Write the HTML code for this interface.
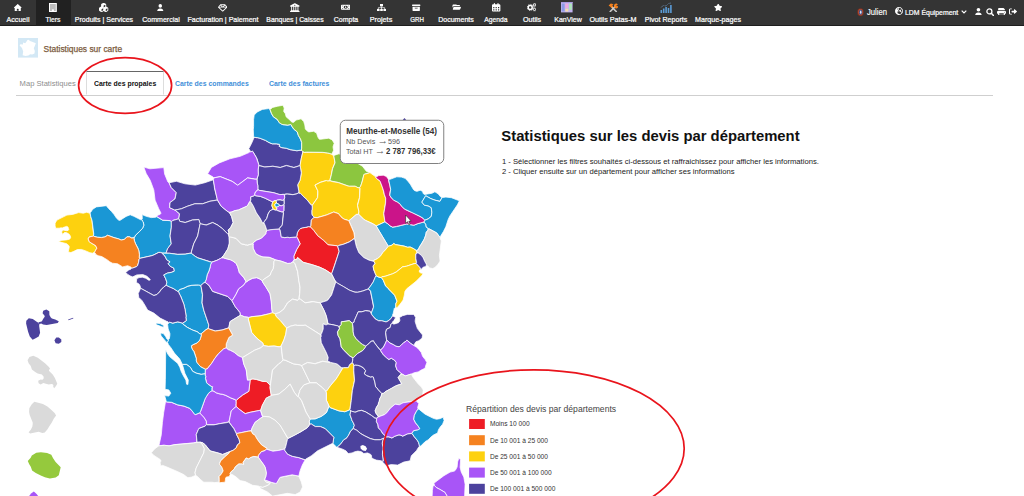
<!DOCTYPE html>
<html lang="fr"><head><meta charset="utf-8"><title>Statistiques sur carte</title>
<style>
html,body{margin:0;padding:0;background:#fff;}
body{width:1024px;height:496px;overflow:hidden;position:relative;font-family:"Liberation Sans",sans-serif;color:#222;}
.abs{position:absolute;white-space:nowrap;}
.ic{position:absolute;display:block;}
#nav{position:absolute;left:0;top:0;width:1024px;height:25.8px;background:#343434;border-bottom:0.4px solid #1e1e1e;box-sizing:border-box}
#nav .sel{position:absolute;left:35.6px;top:0;width:35.3px;height:25.8px;background:#212121;}
.nl{position:absolute;top:15.3px;font-size:7.7px;font-weight:normal;-webkit-text-stroke:0.22px #fff;color:#fff;white-space:nowrap;transform:translateX(-50%);line-height:10px;}
#map{position:absolute;left:0;top:0;}
#map polygon{stroke:#fff;stroke-width:0.75;stroke-linejoin:round;}
</style></head><body>

<div id="nav"><div class="sel"></div>
<svg class="ic" style="left:14.00px;top:3.85px;width:7.50px;height:7.50px" viewBox="0 0 512 512" preserveAspectRatio="none"><path fill="#fff" d="M277.8 8.6c-12.3-11.4-31.3-11.4-43.5 0l-224 208c-9.6 9-12.8 22.9-8 35.1S18.8 272 32 272h16v176c0 35.3 28.7 64 64 64h288c35.3 0 64-28.7 64-64V272h16c13.2 0 25-8.1 29.8-20.3s1.6-26.2-8-35.1zM240 320h32c26.5 0 48 21.5 48 48v96H192v-96c0-26.5 21.5-48 48-48"/></svg>
<div class="nl" style="left:17.75px;transform:translateX(-50%) scaleX(0.928)">Accueil</div>
<div class="nl" style="left:53.25px;transform:translateX(-50%) scaleX(0.892)">Tiers</div>
<svg class="ic" style="left:99.45px;top:2.95px;width:9.30px;height:9.30px" viewBox="0 0 512 512" preserveAspectRatio="none"><path fill="#fff" d="M284-1.3c-17.3-10-38.7-10-56 0l-84.2 48.6c-17.3 10-28 28.5-28 48.5v101.9l-88.3 51c-17.3 10-28 28.5-28 48.5v97.3c0 20 10.7 38.5 28 48.5l84.3 48.6c17.3 10 38.7 10 56 0l88.3-51 88.3 51c17.3 10 38.7 10 56 0l84.1-48.6c17.3-10 28-28.5 28-48.5v-97.3c0-20-10.7-38.5-28-48.5l-88.3-51V95.8c0-20-10.7-38.5-28-48.5zm-52 293.9v106.5l-88.3 51c-1.2.7-2.6 1.1-4 1.1V345.9zm231.4.6c.7 1.2 1.1 2.6 1.1 4v97.3c0 2.9-1.5 5.5-4 6.9L376.2 450c-1.2.7-2.6 1.1-4 1.1V345.8zM348.3 95.8v101.9L256 251V144.5l91.2-52.6c.7 1.2 1.1 2.6 1.1 4z"/></svg>
<div class="nl" style="left:104.1px;transform:translateX(-50%) scaleX(0.911)">Produits | Services</div>
<svg class="ic" style="left:157.22px;top:3.85px;width:6.56px;height:7.50px" viewBox="0 0 448 512" preserveAspectRatio="none"><path fill="#fff" d="M224 248a120 120 0 1 0 0-240 120 120 0 1 0 0 240m-29.7 56C95.8 304 16 383.8 16 482.3c0 16.4 13.3 29.7 29.7 29.7h356.6c16.4 0 29.7-13.3 29.7-29.7 0-98.5-79.8-178.3-178.3-178.3z"/></svg>
<div class="nl" style="left:160.5px;transform:translateX(-50%) scaleX(0.914)">Commercial</div>
<svg class="ic" style="left:217.90px;top:3.60px;width:9.40px;height:8.00px" viewBox="0 0 512 512" preserveAspectRatio="none"><path fill="#fff" d="m168.5 72 87.5 93 87.5-93zm215.4 27.1L311.6 176h129L384 99.1zm50 124.9H78.1L256 420.3zM71.5 176h129l-72.3-76.9L71.6 176zm434.3 40.1-232 256c-4.5 5-11 7.9-17.8 7.9s-13.2-2.9-17.8-7.9l-232-256c-7.7-8.5-8.3-21.2-1.5-30.4l112-152c4.5-6.1 11.7-9.8 19.3-9.8h240c7.6 0 14.8 3.6 19.3 9.8l112 152c6.8 9.2 6.1 21.9-1.5 30.4"/></svg>
<div class="nl" style="left:222.6px;transform:translateX(-50%) scaleX(0.920)">Facturation | Paiement</div>
<svg class="ic" style="left:290.30px;top:3.10px;width:9.60px;height:9.00px" viewBox="0 0 512 512" preserveAspectRatio="none"><path fill="#fff" d="M271.9 20.2c-9.8-5.6-21.9-5.6-31.8 0l-224 128c-12.6 7.2-18.8 22-15.1 36S17.5 208 32 208h32v208l-51.2 38.4C4.7 460.4 0 469.9 0 480c0 17.7 14.3 32 32 32h448c17.7 0 32-14.3 32-32 0-10.1-4.7-19.6-12.8-25.6L448 416V208h32c14.5 0 27.2-9.8 30.9-23.8s-2.5-28.8-15.1-36l-224-128zM400 208v208h-64V208zm-112 0v208h-64V208zm-112 0v208h-64V208zm80-112a32 32 0 1 1 0 64 32 32 0 1 1 0-64"/></svg>
<div class="nl" style="left:295.1px;transform:translateX(-50%) scaleX(0.895)">Banques | Caisses</div>
<svg class="ic" style="left:341.05px;top:4.30px;width:9.40px;height:6.60px" viewBox="0 0 512 512" preserveAspectRatio="none"><path fill="#fff" d="M64 64C28.7 64 0 92.7 0 128v256c0 35.3 28.7 64 64 64h384c35.3 0 64-28.7 64-64V128c0-35.3-28.7-64-64-64zm192 80a112 112 0 1 1 0 224 112 112 0 1 1 0-224M64 184v-48c0-4.4 3.6-8 8-8h48c4.4 0 8.1 3.6 7.5 8-3.6 29-26.6 51.9-55.5 55.5-4.4.5-8-3.1-8-7.5m0 144c0-4.4 3.6-8.1 8-7.5 29 3.6 51.9 26.6 55.5 55.5.5 4.4-3.1 8-7.5 8H72c-4.4 0-8-3.6-8-8zm376-136.5c-29-3.6-51.9-26.6-55.5-55.5-.5-4.4 3.1-8 7.5-8h48c4.4 0 8 3.6 8 8v48c0 4.4-3.6 8.1-8 7.5m8 136.5v48c0 4.4-3.6 8-8 8h-48c-4.4 0-8.1-3.6-7.5-8 3.6-29 26.6-51.9 55.5-55.5 4.4-.5 8 3.1 8 7.5M240 188c-11 0-20 9-20 20 0 9.7 6.9 17.7 16 19.6V276h-4c-11 0-20 9-20 20s9 20 20 20h48c11 0 20-9 20-20s-9-20-20-20h-4v-68c0-11-9-20-20-20z"/></svg>
<div class="nl" style="left:345.75px;transform:translateX(-50%) scaleX(0.910)">Compta</div>
<div class="nl" style="left:381px;transform:translateX(-50%) scaleX(0.940)">Projets</div>
<svg class="ic" style="left:412.40px;top:3.70px;width:8.40px;height:7.80px" viewBox="0 0 512 512" preserveAspectRatio="none"><path fill="#fff" d="M0 64c0-17.7 14.3-32 32-32h448c17.7 0 32 14.3 32 32v32c0 17.7-14.3 32-32 32H32c-17.7 0-32-14.3-32-32zm32 112h448v240c0 35.3-28.7 64-64 64H96c-35.3 0-64-28.7-64-64zm152 64c-13.3 0-24 10.7-24 24s10.7 24 24 24h144c13.3 0 24-10.7 24-24s-10.7-24-24-24z"/></svg>
<div class="nl" style="left:416.6px;transform:translateX(-50%) scaleX(0.804)">GRH</div>
<svg class="ic" style="left:451.90px;top:4.30px;width:9.00px;height:6.60px" viewBox="0 0 576 512" preserveAspectRatio="none"><path fill="#fff" d="m56 225.6-23.6 70.6V96c0-35.3 28.7-64 64-64h138.7c13.8 0 27.3 4.5 38.4 12.8l38.4 28.8c5.5 4.2 12.3 6.4 19.2 6.4h117.3c35.3 0 64 28.7 64 64v16H147c-41.3 0-78 26.4-91.1 65.6zM477.8 448H99c-32.8 0-55.9-32.1-45.5-63.2l48-144C108 221.2 126.4 208 147 208h378.8c32.8 0 55.9 32.1 45.5 63.2l-48 144c-6.5 19.6-24.9 32.8-45.5 32.8"/></svg>
<div class="nl" style="left:456.4px;transform:translateX(-50%) scaleX(0.919)">Documents</div>
<svg class="ic" style="left:492.20px;top:3.00px;width:8.40px;height:9.20px" viewBox="0 0 448 512" preserveAspectRatio="none"><path fill="#fff" d="M128 0c17.7 0 32 14.3 32 32v32h128V32c0-17.7 14.3-32 32-32s32 14.3 32 32v32h32c35.3 0 64 28.7 64 64v288c0 35.3-28.7 64-64 64H64c-35.3 0-64-28.7-64-64V128c0-35.3 28.7-64 64-64h32V32c0-17.7 14.3-32 32-32M64 240v32c0 8.8 7.2 16 16 16h32c8.8 0 16-7.2 16-16v-32c0-8.8-7.2-16-16-16H80c-8.8 0-16 7.2-16 16m128 0v32c0 8.8 7.2 16 16 16h32c8.8 0 16-7.2 16-16v-32c0-8.8-7.2-16-16-16h-32c-8.8 0-16 7.2-16 16m144-16c-8.8 0-16 7.2-16 16v32c0 8.8 7.2 16 16 16h32c8.8 0 16-7.2 16-16v-32c0-8.8-7.2-16-16-16zM64 368v32c0 8.8 7.2 16 16 16h32c8.8 0 16-7.2 16-16v-32c0-8.8-7.2-16-16-16H80c-8.8 0-16 7.2-16 16m144-16c-8.8 0-16 7.2-16 16v32c0 8.8 7.2 16 16 16h32c8.8 0 16-7.2 16-16v-32c0-8.8-7.2-16-16-16zm112 16v32c0 8.8 7.2 16 16 16h32c8.8 0 16-7.2 16-16v-32c0-8.8-7.2-16-16-16h-32c-8.8 0-16 7.2-16 16"/></svg>
<div class="nl" style="left:496.4px;transform:translateX(-50%) scaleX(0.877)">Agenda</div>
<div class="nl" style="left:531.6px;transform:translateX(-50%) scaleX(0.928)">Outils</div>
<div class="nl" style="left:567.5px;transform:translateX(-50%) scaleX(0.911)">KanView</div>
<div class="nl" style="left:612.6px;transform:translateX(-50%) scaleX(0.937)">Outils Patas-M</div>
<div class="nl" style="left:665.75px;transform:translateX(-50%) scaleX(0.921)">Pivot Reports</div>
<svg class="ic" style="left:713.78px;top:3.85px;width:8.44px;height:7.50px" viewBox="0 0 576 512" preserveAspectRatio="none"><path fill="#fff" d="M309.5-18.9c-4.1-8-12.4-13.1-21.4-13.1s-17.3 5.1-21.4 13.1l-73.6 144.2-159.9 25.4c-8.9 1.4-16.3 7.7-19.1 16.3s-.5 18 5.8 24.4l114.4 114.5-25.2 159.9c-1.4 8.9 2.3 17.9 9.6 23.2s16.9 6.1 25 2l144.4-73.4L432.4 491c8 4.1 17.7 3.3 25-2s11-14.2 9.6-23.2l-25.3-159.9 114.4-114.5c6.4-6.4 8.6-15.8 5.8-24.4s-10.1-14.9-19.1-16.3L383 125.3z"/></svg>
<div class="nl" style="left:718px;transform:translateX(-50%) scaleX(0.928)">Marque-pages</div>
<svg class="ic" style="left:49.2px;top:2.8px;width:7.8px;height:9px" viewBox="0 0 7.8 9"><rect x="0.5" y="0.5" width="6.8" height="8" fill="#bdbdbd" stroke="#fff" stroke-width="1"/><rect x="2.9" y="6.4" width="2" height="2.1" fill="#fff"/></svg>
<svg class="ic" style="left:376.8px;top:4px;width:9px;height:7.4px" viewBox="0 0 9 7.4"><g fill="#fff"><rect x="3" y="0" width="3" height="2.4"/><rect x="0" y="5" width="2.6" height="2.4"/><rect x="3.2" y="5" width="2.6" height="2.4"/><rect x="6.4" y="5" width="2.6" height="2.4"/></g><path d="M4.5 2.4V5M1.3 5V3.7H7.7V5" fill="none" stroke="#fff" stroke-width="0.7"/></svg>
<svg class="ic" style="left:527px;top:3.2px;width:9.4px;height:8.4px" viewBox="0 0 9.4 8.4"><g fill="none" stroke="#fff"><circle cx="3.2" cy="4.4" r="2" stroke-width="1.5"/><circle cx="3.2" cy="4.4" r="3" stroke-width="0.9" stroke-dasharray="1.1 1.25"/><circle cx="7.5" cy="1.9" r="1.1" stroke-width="0.9"/><circle cx="7.5" cy="1.9" r="1.7" stroke-width="0.6" stroke-dasharray="0.7 0.63"/><circle cx="7.5" cy="6.4" r="1.1" stroke-width="0.9"/><circle cx="7.5" cy="6.4" r="1.7" stroke-width="0.6" stroke-dasharray="0.7 0.63"/></g></svg>
<svg class="ic" style="left:607.8px;top:2.6px;width:10.4px;height:9.4px" viewBox="0 0 10.4 9.4"><path d="M2.2 8.6L7.4 3.4" stroke="#c9c9c9" stroke-width="1.5" stroke-linecap="round"/><path d="M8.3 8.6L3.6 3.9" stroke="#c9c9c9" stroke-width="1.5" stroke-linecap="round"/><path d="M0.6 2.6L2.8 0.5L5.6 1.2L4.3 2.2L5.2 3.6L3.6 5.1L2.7 3.9Z" fill="#f5821f"/><path d="M6.3 1.4Q8.3 -0.2 9.9 1.4L8.3 2.6L9 3.5L10.1 2.7Q10.5 4.6 8.6 5.4Q7 5.6 6.6 4.4Q5.6 3 6.3 1.4Z" fill="#f5821f"/></svg>
<svg class="ic" style="left:561.4px;top:2.3px;width:11.6px;height:10.4px" viewBox="0 0 11.6 10.4"><rect width="11.6" height="10.4" fill="#c3b4ee"/><rect x="0.7" y="1.6" width="2.9" height="7.9" fill="#8d9ae6"/><rect x="4.3" y="1.6" width="3" height="4.4" fill="#f0abdf"/><rect x="8" y="1.6" width="2.9" height="6.2" fill="#ace6bb"/><rect x="4.3" y="6.6" width="3" height="2.9" fill="#f6dcae"/><rect x="0" y="0" width="11.6" height="1" fill="#a99be0"/></svg>
<svg class="ic" style="left:660px;top:2px;width:12px;height:11px" viewBox="0 0 12 11"><g fill="#5b9bd5"><rect x="0.5" y="8" width="1.6" height="3"/><rect x="2.9" y="6.5" width="1.6" height="4.5"/><rect x="5.3" y="5" width="1.6" height="6"/><rect x="7.7" y="6" width="1.6" height="5"/><rect x="10.1" y="3" width="1.6" height="8"/></g><polyline points="0.8,5.5 3.5,3.5 6,4 8.5,1.5 11,1" fill="none" stroke="#7aa7d6" stroke-width="0.6" stroke-dasharray="1 0.6"/></svg>
<svg class="ic" style="left:856.9px;top:8.1px;width:7px;height:8.4px" viewBox="0 0 7 8.4"><ellipse cx="3.5" cy="4.2" rx="3.3" ry="4" fill="#7a2f22"/><ellipse cx="3.5" cy="4.2" rx="2.3" ry="3.1" fill="#c4542e"/><ellipse cx="3.6" cy="4.2" rx="1.7" ry="2.6" fill="#3b4f8f"/><ellipse cx="3.7" cy="4.2" rx="0.8" ry="1.6" fill="#dfe3f0"/></svg>
<div class="abs" style="left:866.9px;top:7px;font-size:8.6px;color:#fff;-webkit-text-stroke:0.15px #fff;line-height:11px;transform-origin:0 50%;transform:scaleX(0.89)">Julien</div>
<svg class="ic" style="left:894.70px;top:7.00px;width:8.00px;height:8.00px" viewBox="0 0 512 512" preserveAspectRatio="none"><path fill="#fff" d="M256.2 48C371 48.1 464 141.2 464 256c0 22.1-3.4 43.4-9.8 63.4-2 .4-4.1.6-6.2.6h-2.7c-8.5 0-16.6-3.4-22.6-9.4l-29.3-29.3c-6-6-9.4-14.1-9.4-22.6V208c0-8.8 7.2-16 16-16s16-7.2 16-16-7.2-16-16-16h-24c-13.3 0-24 10.7-24 24s-10.7 24-24 24h-56c-8.8 0-16 7.2-16 16s-7.2 16-16 16h-25.4c-12.5 0-22.6-10.1-22.6-22.6 0-6 2.4-11.8 6.6-16l70.1-70.1c2.1-2.1 3.3-5 3.3-8 0-6.2-5.1-11.3-11.3-11.3h-14.1c-12.5 0-22.6-10.1-22.6-22.6 0-6 2.4-11.8 6.6-16l23.1-23.1c.8-.8 1.6-1.5 2.5-2.2zm182.2 308.1c-32.8 59.6-93.9 101.4-165.2 107.2-.7-2.3-1.1-4.8-1.1-7.3 0-13.3-10.7-24-24-24h-26.7c-8.5 0-16.6-3.4-22.6-9.4l-29.3-29.3c-6-6-9.4-14.1-9.4-22.6V304c0-17.7 14.3-32 32-32h98.7c8.5 0 16.6 3.4 22.6 9.4l29.3 29.3c6 6 14.1 9.4 22.6 9.4h5.5c8.5 0 16.6 3.4 22.6 9.4l16 16c4.2 4.2 10 6.6 16 6.6 4.8 0 9.3 1.5 13 4.1zM256 512l26.2-1.3c-8.6.9-17.3 1.3-26.2 1.3m26.2-1.3C411.3 497.6 512 388.6 512 256 512 114.6 397.4 0 256 0S0 114.6 0 256c0 127.5 93.2 233.3 215.3 252.8 13.2 2.1 26.8 3.2 40.7 3.2zm-94.9-387.4-32 32c-6.2 6.2-16.4 6.2-22.6 0s-6.2-16.4 0-22.6l32-32c6.2-6.2 16.4-6.2 22.6 0s6.2 16.4 0 22.6"/></svg>
<div class="abs" style="left:904.7px;top:6.6px;font-size:7.7px;color:#fff;-webkit-text-stroke:0.22px #fff;line-height:11px;transform-origin:0 50%;transform:scaleX(0.897)">LDM Équipement</div>
<svg class="ic" style="left:961px;top:10.2px;width:6px;height:4px" viewBox="0 0 6 4"><path d="M0.7 0.7L3 3L5.3 0.7" fill="none" stroke="#fff" stroke-width="1.2"/></svg>
<svg class="ic" style="left:975.15px;top:7.70px;width:6.90px;height:7.40px" viewBox="0 0 448 512" preserveAspectRatio="none"><path fill="#fff" d="M224 248a120 120 0 1 0 0-240 120 120 0 1 0 0 240m-29.7 56C95.8 304 16 383.8 16 482.3c0 16.4 13.3 29.7 29.7 29.7h356.6c16.4 0 29.7-13.3 29.7-29.7 0-98.5-79.8-178.3-178.3-178.3z"/></svg>
<svg class="ic" style="left:985.5px;top:7.7px;width:8.2px;height:8.2px" viewBox="0 0 8.2 8.2"><circle cx="3.4" cy="3.4" r="2.5" fill="none" stroke="#fff" stroke-width="1.3"/><path d="M5.3 5.3L7.6 7.6" stroke="#fff" stroke-width="1.5" stroke-linecap="round"/></svg>
<svg class="ic" style="left:996.70px;top:7.70px;width:9.00px;height:7.80px" viewBox="0 0 512 512" preserveAspectRatio="none"><path fill="#fff" d="M64 64c0-35.3 28.7-64 64-64h213.5c17 0 33.3 6.7 45.3 18.7l42.5 42.5c12 12 18.7 28.3 18.7 45.3V144H64zM0 256c0-35.3 28.7-64 64-64h384c35.3 0 64 28.7 64 64v96c0 17.7-14.3 32-32 32h-32v64c0 35.3-28.7 64-64 64H128c-35.3 0-64-28.7-64-64v-64H32c-17.7 0-32-14.3-32-32zm128 160v32h256v-96H128zm328-144a24 24 0 1 0-48 0 24 24 0 1 0 48 0"/></svg>
<svg class="ic" style="left:1009.20px;top:8.20px;width:8.00px;height:7.00px" viewBox="0 0 512 512" preserveAspectRatio="none"><path fill="#fff" d="M505 273c9.4-9.4 9.4-24.6 0-33.9L361 95c-6.9-6.9-17.2-8.9-26.2-5.2S320 102.3 320 112v80H208c-26.5 0-48 21.5-48 48v32c0 26.5 21.5 48 48 48h112v80c0 9.7 5.8 18.5 14.8 22.2s19.3 1.7 26.2-5.2zM160 96c17.7 0 32-14.3 32-32s-14.3-32-32-32H96C43 32 0 75 0 128v256c0 53 43 96 96 96h64c17.7 0 32-14.3 32-32s-14.3-32-32-32H96c-17.7 0-32-14.3-32-32V128c0-17.7 14.3-32 32-32z"/></svg>
</div>
<svg class="ic" style="left:17.5px;top:38.3px;width:20px;height:19.6px" viewBox="0 0 20 19.6"><rect width="20" height="19.6" fill="#d3e8f5"/><polygon fill="#fff" points="9.2,2.2 10.6,1.7 12,3 14.8,4 17.8,5.2 17,7.6 15.8,10.3 16.8,13 16.5,15.6 14.2,16.6 12.2,16.2 10.4,17.6 7.6,17.9 4.6,17.2 5.2,13.4 4,10 1.6,7.4 2.4,6.2 5,6.6 5,4.6 7.2,5.2 8.4,3.8"/></svg>
<div class="abs" style="left:43.6px;top:43.8px;font-size:8.42px;color:#7b5b3d;-webkit-text-stroke:0.25px #7b5b3d;line-height:11px;">Statistiques sur carte</div>
<div class="abs" style="left:16px;top:95.3px;width:977px;height:1px;background:#cfcfcf"></div>
<div class="abs" style="left:86.3px;top:70.6px;width:77.4px;height:24.8px;border:1px solid #ddd;border-top:1.6px solid #666;border-bottom:1px solid #fff;background:#fff;box-sizing:border-box"></div>
<div class="abs" style="left:19.6px;top:77.7px;font-size:7.6px;color:#8e8e8e;line-height:11px;">Map Statistiques</div>
<div class="abs" style="left:94px;top:77.7px;font-size:7.7px;font-weight:bold;transform-origin:0 50%;transform:scaleX(0.899);color:#111;line-height:11px;">Carte des propales</div>
<div class="abs" style="left:175.3px;top:77.7px;font-size:7.7px;font-weight:bold;transform-origin:0 50%;transform:scaleX(0.899);color:#3f8fd9;line-height:11px;">Carte des commandes</div>
<div class="abs" style="left:269px;top:77.7px;font-size:7.7px;font-weight:bold;transform-origin:0 50%;transform:scaleX(0.899);color:#3f8fd9;line-height:11px;">Carte des factures</div>
<svg id="map" width="1024" height="496" viewBox="0 0 1024 496">
<polygon fill="#4c429d" points="248.8,148.7 250.1,150.7 250.1,151.6 250.8,151.8 252.4,151.2 252.8,151.4 256.2,157.1 257.1,158.9 258.9,165.4 264.8,166.9 272.9,166.2 280.2,167.4 286.4,165.4 293.9,167.4 299.8,165.6 300.1,165.2 301.2,158.6 302.9,151.6 301.3,150.4 300.1,150.3 296.9,150.8 290.2,149.7 286.2,148.3 281.7,147.7 279.1,146.3 279.7,144.6 276.4,143.9 272.2,143.9 268.7,142.4 265.6,140.6 259.9,138.3 257.3,137.7 256.9,137.8 254.9,137.4 254.1,137.4 251.7,143.1"/>
<polygon fill="#fdd10f" points="331.7,154.1 327.7,153.1 324.1,152.6 313.2,152.2 306.4,152.2 304.2,152.4 302.9,151.7 301.3,158.6 300.1,165.3 301.4,172.8 300.2,180.1 297.7,184.9 298.9,191.1 298.7,192.9 300.7,193.4 302.3,195.3 307.2,199.9 310.3,203.9 311.8,205.2 312.2,205.3 317.4,197.7 317.8,190.9 314.9,185.1 320.3,182.3 326.2,180.4 327.7,180.9 330.2,180.8 329.9,179.8 331.3,174.7 332.4,168.7 334.9,162.7 333.7,155.6 332.6,155.2"/>
<polygon fill="#4c429d" points="258.8,165.6 258.2,169.9 258.4,174.6 257.1,178.9 257.3,183.1 257.9,185.6 257.9,188.6 258.2,189.7 259.3,190.3 273.9,192.7 278.1,194.1 280.6,194.6 282.9,194.3 284.4,194.4 286.1,193.9 289.7,194.1 292.8,194.6 296.1,193.9 298.6,192.9 298.8,191.1 297.6,184.9 300.1,180.1 301.3,172.8 300.1,165.6 293.9,167.6 286.4,165.6 280.2,167.6 272.9,166.3 264.8,167.1"/>
<polygon fill="#8cc63f" points="333.9,155.4 333.8,155.8 335.1,162.7 332.6,168.7 331.4,174.7 330.1,179.8 330.3,180.9 338.2,182.4 348.1,185.9 349.3,186.2 355.2,186.2 358.1,187.7 359.6,187.6 360.6,186.1 361.6,183.3 363.9,174.6 364.3,174.2 368.9,172.9 369.8,172.4 366.4,171.3 362.4,166.2 355.8,162.3 350.1,160.1 344.6,156.1 338.9,153.8"/>
<polygon fill="#fdd10f" points="315.1,185.1 317.9,190.9 317.9,193.6 317.6,197.7 312.3,205.3 312.3,209.2 311.9,210.3 311.9,213.9 312.3,215.2 313.7,216.7 313.9,217.3 317.3,217.6 326.4,214.9 333.9,211.9 338.8,213.7 339.3,214.7 342.6,218.2 344.6,219.3 347.4,220.1 348.8,220.7 356.3,214.4 358.6,214.2 358.8,211.4 357.4,204.9 359.4,197.7 359.9,188.4 359.6,187.7 358.1,187.8 355.2,186.3 349.3,186.3 348.1,186.1 338.2,182.6 332.8,181.7 330.2,180.9 327.7,181.1 326.4,180.6 320.3,182.4"/>
<polygon fill="#fdd10f" points="369.9,172.6 368.9,173.1 364.3,174.3 363.8,174.9 362.4,181.1 360.7,186.1 359.7,187.6 360.1,188.4 359.6,197.7 357.6,205.3 358.9,211.4 358.7,214.3 363.3,218.8 365.7,220.4 372.1,223.3 376.2,225.8 376.6,225.8 384.9,221.8 383.7,213.6 385.4,203.1 385.6,198.2 384.2,194.3 383.4,190.9 382.1,186.7 380.1,181.4 379.3,180.4 377.1,179.1 375.6,177.2 375.4,176.6"/>
<polygon fill="#1a97d5" points="376.4,225.9 376.7,226.8 388.3,246.2 391.9,245.1 393.8,243.4 395.3,244.4 404.3,246.1 407.6,247.2 410.1,246.9 413.6,248.6 416.3,250.4 418.1,249.8 419.8,246.2 421.3,244.1 424.2,239.1 425.7,235.1 426.2,232.3 427.8,230.3 428.2,229.1 427.1,227.4 426.2,227.1 425.7,224.2 424.1,222.2 422.2,222.4 417.2,223.9 413.9,225.3 406.7,224.1 396.6,226.6 392.6,227.2 390.1,225.9 387.6,223.7 384.9,221.9"/>
<polygon fill="#dadada" points="356.3,214.6 350.8,219.3 349.6,220.1 348.9,220.9 351.7,226.8 353.9,232.4 354.7,237.2 354.2,238.6 354.6,238.7 354.8,239.2 356.4,246.4 358.9,252.6 363.8,257.4 369.1,260.1 373.8,261.3 373.8,260.3 377.4,258.6 380.6,255.9 382.9,252.3 385.3,249.9 388.3,246.3 376.6,226.8 376.3,225.9 373.1,223.9 365.7,220.6 363.3,218.9 358.6,214.3"/>
<polygon fill="#f58220" points="313.9,217.4 311.2,220.1 310.8,225.7 310.4,226.9 313.9,230.6 317.8,235.8 323.4,240.2 327.8,244.4 329.2,244.9 336.2,245.6 337.7,246.1 338.6,245.4 343.4,244.2 349.4,241.8 354.1,238.6 354.6,237.2 353.8,232.4 348.8,220.8 347.4,220.2 344.6,219.4 342.2,218.1 339.2,214.7 338.8,213.8 333.7,212.1 326.4,215.1 317.3,217.7"/>
<polygon fill="#ee1c25" points="300.1,228.8 299.2,229.7 297.8,231.9 297.3,233.2 297.1,235.3 296.6,236.9 297.3,237.6 300.2,243.8 296.7,249.6 293.9,256.2 294.2,259.8 296.7,259.3 297.6,257.4 303.1,262.2 312.4,264.7 319.6,267.1 325.4,269.8 331.6,273.8 339.1,251.3 337.6,246.2 336.2,245.7 328.6,244.9 327.8,244.6 323.4,240.3 317.7,235.8 313.8,230.6 310.2,226.8 308.4,226.7 305.9,227.4 302.4,227.9"/>
<polygon fill="#4c429d" points="354.1,238.7 349.4,241.9 343.8,244.2 338.6,245.6 337.7,246.2 339.2,251.3 334.2,266.7 331.6,273.9 334.7,280.1 335.6,281.2 335.7,282.1 336.4,282.2 337.6,283.2 350.3,290.6 354.9,292.1 357.7,292.2 362.7,290.9 367.9,289.1 369.8,286.9 373.1,282.1 376.1,275.4 373.7,269.9 373.1,266.4 373.2,265.8 374.9,263.6 374.2,261.7 373.9,261.4 369.1,260.2 363.8,257.6 358.8,252.6 356.3,246.4 354.6,238.8"/>
<polygon fill="#a855f7" points="252.7,243.2 252.6,243.6 253.3,243.8 253.1,245.2 253.2,248.3 255.4,252.9 256.3,254.1 259.6,255.8 262.9,256.9 269.3,257.3 274.3,259.2 275.3,259.8 281.1,261.1 287.7,263.4 290.6,263.2 293.1,261.7 294.1,259.8 293.8,256.2 296.6,249.6 300.1,243.8 297.2,237.6 296.4,236.9 295.7,237.2 292.1,237.3 289.6,237.7 287.8,237.3 284.8,237.7 281.3,237.1 279.9,229.9 279.2,229.1 269.9,229.8 267.4,230.3 266.7,230.7 265.9,232.7 265.8,233.8 261.3,238.3 256.3,240.2"/>
<polygon fill="#1a97d5" points="142.1,214.6 142.3,218.7 141.7,219.4 142.4,221.1 143.3,221.9 143.9,225.2 142.7,228.2 140.7,230.4 135.6,235.3 134.2,237.7 134.1,238.4 134.7,241.4 135.7,243.9 137.8,247.8 138.9,250.8 139.6,254.8 139.3,256.9 139.4,257.9 139.9,258.3 151.9,255.6 153.9,254.8 158.8,252.3 160.7,252.4 162.4,252.9 166.2,253.1 166.2,252.4 167.6,248.6 171.2,243.8 169.9,235.9 171.3,227.2 171.3,221.7 170.2,220.7 162.6,220.2 157.7,217.3 156.8,216.6 156.2,217.1 155.2,217.3 151.2,217.6 146.2,216.3"/>
<polygon fill="#a855f7" points="143.8,167.1 146.2,173.6 150.2,180.3 153.8,189.9 155.1,200.2 158.8,208.9 160.8,212.8 160.8,213.6 160.2,214.3 157.1,215.6 156.9,216.6 162.6,220.1 170.2,220.6 171.3,221.6 172.8,220.3 178.6,218.8 178.8,218.3 179.4,213.8 175.1,210.2 169.4,207.6 169.9,202.6 174.9,198.8 176.2,192.6 171.2,187.6 168.9,182.6 168.4,182.4 167.8,181.8 164.6,173.9 163.8,167.6 149.9,168.8"/>
<polygon fill="#4c429d" points="213.2,179.8 204.8,182.7 195.3,185.1 184.9,183.8 176.4,181.3 169.3,182.7 169.1,182.6 171.3,187.6 176.3,192.6 175.1,198.8 170.1,202.6 169.6,207.6 174.9,210.1 181.4,208.7 187.4,206.2 194.9,203.7 202.7,203.7 209.9,201.2 217.4,199.9 214.4,187.8 214.3,185.9"/>
<polygon fill="#4c429d" points="233.1,222.6 231.6,216.6 229.3,212.4 227.2,211.2 221.1,206.2 217.4,200.1 209.9,201.3 202.7,203.8 194.9,203.8 187.4,206.3 181.4,208.8 175.1,210.1 179.6,213.8 178.8,218.7 179.6,221.1 179.9,221.3 185.2,222.4 192.4,219.9 198.8,219.4 200.2,223.7 206.1,224.9 212.7,222.4 217.4,224.8 222.3,228.4 227.9,233.9 228.4,233.9 228.8,232.7 228.1,230.1 230.6,227.6"/>
<polygon fill="#a855f7" points="258.8,164.9 256.4,157.8 252.7,151.4 252.4,151.3 250.8,151.9 249.9,151.7 248.9,152.6 240.2,156.3 229.9,158.8 219.3,162.9 211.4,167.4 207.6,173.8 213.1,177.1 213.7,177.8 220.3,176.6 232.2,181.3 237.7,185.2 247.6,177.8 254.9,179.1 256.9,179.1 258.3,174.6 258.1,169.9"/>
<polygon fill="#a855f7" points="213.3,179.7 214.4,185.9 214.6,187.8 217.4,199.8 221.2,206.2 227.2,211.1 229.2,212.3 231.2,212.1 234.9,210.6 238.4,209.9 246.6,206.3 247.8,205.1 249.3,202.2 250.4,200.9 250.4,200.3 250.8,199.6 250.6,196.9 253.9,195.9 254.8,195.1 254.8,193.7 255.4,191.9 257.9,189.6 257.8,185.6 257.2,183.1 256.9,179.2 254.9,179.2 247.6,177.9 237.7,185.3 232.2,181.4 220.3,176.7 213.8,177.9 213.8,179.1"/>
<polygon fill="#4c429d" points="172.6,220.6 171.3,221.9 171.4,227.2 170.1,235.9 171.3,243.8 167.7,248.6 166.3,252.4 166.3,253.1 169.4,253.2 177.7,254.3 185.3,254.1 189.2,253.3 191.2,253.2 191.3,251.9 193.7,243.7 197.6,235.9 200.1,223.7 198.8,219.6 192.4,220.1 185.2,222.6 179.7,221.3 178.8,218.8"/>
<polygon fill="#4c429d" points="200.1,223.8 197.7,235.9 193.8,243.7 191.4,251.9 191.3,253.3 195.1,256.2 197.8,257.8 211.7,262.1 216.9,260.3 221.7,257.8 221.9,257.2 223.7,255.3 227.7,249.1 229.2,243.8 229.3,242.3 229.1,237.1 228.4,234.1 227.6,233.8 222.3,228.6 217.8,225.2 212.7,222.6 206.4,225.1"/>
<polygon fill="#1a97d5" points="187.9,286.2 183.9,288.2 180.1,289.4 178.9,290.3 178.6,291.1 178.6,291.7 179.6,294.1 180.6,295.7 183.9,304.2 185.2,309.8 186.2,316.2 185.9,317.1 186.4,320.6 182.6,323.2 183.2,324.3 187.3,327.3 192.8,330.1 197.1,331.6 199.9,333.8 200.9,333.9 205.8,329.8 208.2,328.3 208.7,325.8 208.7,324.9 203.7,310.2 201.9,302.8 202.4,294.8 201.2,287.2 200.4,285.4 198.4,285.1 192.4,285.3"/>
<polygon fill="#4c429d" points="203.9,282.6 201.8,284.7 200.7,285.4 201.3,287.2 202.6,294.8 202.1,302.8 203.8,310.2 208.8,324.9 208.3,328.3 209.3,328.9 215.2,330.9 222.1,329.9 228.4,327.9 228.8,327.7 229.8,322.2 230.2,321.4 240.3,315.3 240.1,312.7 235.2,306.7 231.8,300.6 227.8,296.6 212.6,291.4 208.8,285.2 205.6,282.7"/>
<polygon fill="#a855f7" points="221.8,257.8 216.9,260.4 211.8,262.2 210.8,264.2 210.3,266.9 209.1,270.9 207.2,274.9 206.4,279.3 205.3,281.4 205.4,282.6 208.9,285.2 212.6,291.3 227.3,296.2 231.9,300.4 232.6,299.9 235.9,294.3 238.6,288.9 243.8,284.9 245.9,281.4 243.9,277.9 239.3,272.6 237.7,266.8 236.1,263.6 235.2,262.7 232.3,260.7 230.4,259.8 224.9,258.4 223.8,257.9"/>
<polygon fill="#a855f7" points="256.7,277.7 252.6,278.3 248.8,280.2 246.3,282.1 246.1,281.7 243.6,285.3 238.7,288.9 236.1,294.3 232.7,299.9 231.9,300.6 235.3,306.7 240.2,312.7 240.4,315.1 244.6,316.8 247.4,317.1 248.8,317.4 252.1,316.6 260.2,315.8 268.2,313.9 272.4,312.7 271.8,309.3 271.2,301.1 269.9,293.8 266.3,287.7 262.6,282.1 262.2,280.7 259.9,279.1"/>
<polygon fill="#dadada" points="293.2,261.8 290.6,263.3 287.7,263.6 281.1,261.2 275.3,259.9 273.8,261.3 273.7,265.7 273.2,268.6 270.9,272.7 270.2,275.1 264.1,279.1 262.3,280.8 262.7,282.1 266.4,287.7 270.1,293.8 271.3,301.1 271.9,309.3 272.6,312.7 274.7,313.6 275.6,313.7 278.7,312.8 283.7,309.2 287.4,302.9 292.3,299.2 292.9,299.1 297.6,300.3 298.9,298.7 299.6,293.8 299.9,287.3 298.7,280.4 297.6,271.8 294.9,263.7"/>
<polygon fill="#dadada" points="294.1,259.9 293.2,261.7 295.1,263.7 297.6,271.2 298.8,280.4 300.1,287.3 299.7,293.8 299.1,298.7 300.4,299.2 305.2,302.8 312.2,301.6 320.1,302.8 327.4,300.3 331.4,294.9 335.6,282.4 335.4,281.2 334.6,280.1 331.6,274.1 325.4,269.9 319.6,267.2 312.4,264.8 303.1,262.3 297.6,257.6 296.7,259.4"/>
<polygon fill="#4c429d" points="320.2,302.8 324.2,310.6 326.4,316.2 328.1,323.8 336.9,325.6 338.9,326.4 340.7,325.4 341.2,324.4 341.3,321.8 349.4,320.6 349.9,321.3 352.4,323.1 353.9,322.2 354.3,320.6 358.2,311.8 361.4,311.8 366.1,310.6 370.1,311.2 371.2,313.6 373.3,307.6 373.4,306.1 370.4,291.1 370.2,290.6 368.1,289.1 362.7,291.1 357.7,292.3 354.9,292.2 349.6,290.3 343.7,286.7 337.6,283.3 336.2,282.2 335.7,282.2 331.6,294.9 327.9,299.9 327.2,300.6"/>
<polygon fill="#dadada" points="275.3,313.8 276.1,316.3 280.4,320.6 286.6,327.9 289.9,326.4 290.1,326.2 295.2,324.9 297.3,325.3 304.1,325.3 305.1,324.9 319.9,334.3 320.9,334.4 323.1,329.1 323.1,323.8 323.3,323.7 325.6,324.7 326.4,324.7 328.1,323.9 327.6,322.8 326.3,316.2 324.1,310.6 320.1,302.9 313.1,301.7 305.2,302.9 300.4,299.3 298.9,298.8 297.6,300.4 292.9,299.2 292.3,299.3 287.6,302.9 283.7,309.3 279.2,312.7"/>
<polygon fill="#fdd10f" points="248.7,317.6 248.4,318.2 248.6,319.9 251.7,332.4 256.7,338.1 262.9,343.1 263.6,345.6 268.4,346.3 274.1,345.9 279.2,346.8 281.1,346.1 283.8,340.1 285.7,334.3 286.6,328.1 284.1,325.3 280.3,320.6 275.9,316.3 275.2,313.8 272.3,312.8 268.2,314.1 260.2,315.9 252.1,316.7"/>
<polygon fill="#dadada" points="240.4,315.3 230.3,321.4 230.1,321.8 228.9,327.7 228.7,327.8 232.7,335.1 228.9,337.6 226.3,343.9 226.3,347.8 228.3,349.6 230.1,350.2 234.2,352.3 238.2,355.6 241.6,357.2 242.6,357.4 254.6,350.2 260.6,347.8 263.1,345.8 263.3,345.3 262.8,343.1 256.7,338.2 251.6,332.4 248.4,319.9 248.3,318.2 248.6,317.6 247.4,317.2 244.6,316.9 241.6,315.6"/>
<polygon fill="#f58220" points="228.7,327.9 222.1,330.1 215.2,331.1 209.3,329.1 208.2,328.4 205.8,329.9 201.1,333.9 201.4,335.2 200.4,338.6 199.8,340.1 198.4,341.8 196.2,343.4 194.1,344.2 191.4,345.7 191.8,348.1 192.8,349.9 194.1,351.6 196.4,358.7 196.3,360.3 196.8,362.3 198.8,364.8 200.8,366.8 205.3,369.2 207.2,368.8 211.7,363.2 214.8,358.3 218.4,353.6 223.8,348.7 226.2,347.8 226.2,343.9 228.9,337.4 232.6,335.1"/>
<polygon fill="#1a97d5" points="376.1,275.9 375.2,277.3 373.2,282.1 369.9,286.9 368.2,288.9 370.2,290.4 370.6,291.1 373.6,306.1 373.4,307.6 371.4,312.9 371.3,313.9 375.2,318.8 378.3,320.6 381.7,320.7 385.2,321.7 386.4,321.8 389.6,319.8 390.6,318.8 392.7,315.8 392.6,314.7 393.2,313.4 394.3,308.4 395.1,307.6 395.7,307.4 395.8,304.8 395.6,304.1 396.9,301.2 394.6,295.2 388.9,289.4 387.6,287.7 385.6,286.1 383.3,280.4 382.1,278.6 381.2,277.7 378.1,276.9 376.7,276.1"/>
<polygon fill="#a855f7" points="165.9,401.7 165.4,402.4 163.7,412.6 162.4,422.7 161.3,434.8 159.1,444.9 158.7,445.8 163.4,445.2 169.1,445.8 174.8,444.6 193.2,442.9 196.9,442.3 196.2,434.4 198.7,428.8 199.2,428.3 205.1,426.1 206.4,424.4 206.3,421.1 203.8,417.2 199.7,412.9 195.1,414.8 190.6,409.2 189.7,408.4 184.1,406.2 177.6,404.9 171.6,402.4 167.1,402.1"/>
<polygon fill="#a855f7" points="211.7,390.9 210.1,391.9 208.3,393.6 205.9,397.2 204.8,399.7 201.3,409.7 199.8,412.9 203.9,417.2 206.4,421.1 206.6,424.4 207.3,424.8 213.9,424.8 228.8,421.9 229.9,417.6 231.2,410.8 235.2,407.2 236.3,406.8 235.9,405.1 236.2,403.2 236.1,400.6 235.2,399.7 230.6,397.9 225.7,395.4 222.7,394.4 220.2,394.1 216.7,393.1 213.7,391.2 212.2,390.8"/>
<polygon fill="#ee1c25" points="270.4,384.2 270.1,385.2 266.7,381.8 265.9,381.6 262.7,381.4 256.6,379.6 252.9,378.9 250.7,379.4 250.3,379.8 250.1,380.7 248.9,391.3 242.7,395.1 237.2,399.4 236.2,400.6 236.3,403.2 236.1,405.1 236.4,406.7 239.9,409.7 245.2,413.6 250.3,412.2 260.4,410.2 260.8,409.7 262.3,405.3 266.1,398.2 271.3,395.4 272.2,395.3 272.1,395.1 271.3,395.2 271.1,394.7 269.9,387.9"/>
<polygon fill="#a855f7" points="229.1,422.1 234.1,428.8 236.3,433.4 237.1,433.4 248.4,431.1 251.1,430.8 252.2,427.7 254.9,422.4 263.1,416.4 262.6,416.4 262.3,416.1 260.4,410.3 250.3,412.3 245.2,413.7 239.9,409.8 236.4,406.8 235.2,407.3 231.3,410.8"/>
<polygon fill="#4c429d" points="239.8,442.9 239.1,439.6 236.2,433.9 236.4,433.6 236.2,433.4 233.9,428.8 229.7,423.3 228.9,421.9 227.1,422.6 219.7,423.7 213.9,424.9 207.3,424.9 206.4,424.6 205.1,426.2 199.2,428.4 198.4,429.6 196.3,434.4 197.1,442.3 200.3,442.1 202.8,442.8 205.4,444.9 210.1,450.8 218.2,452.9 222.6,454.4 233.2,450.2 236.2,447.8 237.4,444.7"/>
<polygon fill="#dadada" points="255.1,422.4 252.3,427.7 251.2,430.9 252.8,433.9 255.2,435.3 256.3,437.7 258.8,441.4 262.1,445.3 267.1,448.4 266.6,448.9 266.7,449.2 272.6,451.1 278.9,450.3 284.1,449.1 284.9,448.4 285.9,445.4 287.3,439.6 288.4,438.2 287.4,437.7 280.1,425.2 274.9,420.1 269.3,416.8 263.6,416.4 260.3,418.4"/>
<polygon fill="#dadada" points="302.6,486.9 301.3,481.9 298.8,476.2 292.9,474.9 280.1,477.4 276.3,483.6 271.3,482.4 264.7,479.8 264.7,480.4 266.3,482.1 270.2,483.4 267.8,485.3 262.7,487.3 260.3,486.7 259.8,486.8 260.1,487.2 260.1,488.3 267.4,491.9 272.6,496.1 287.3,493.3 295.2,494.6 300.1,492.1"/>
<polygon fill="#a855f7" points="305.1,459.9 298.9,457.7 292.4,456.4 287.6,454.2 284.6,450.3 284.4,449.9 284.7,449.3 284.4,449.1 278.9,450.4 272.9,451.2 266.4,449.2 264.8,450.6 261.3,451.7 258.8,454.8 258.3,456.3 258.4,457.4 264.1,465.2 265.3,467.6 266.4,473.1 265.8,476.6 264.6,479.7 271.3,482.3 275.8,483.4 276.6,483.2 279.7,477.8 280.3,477.2 292.2,474.8 298.8,476.1 300.1,470.7 302.3,465.1"/>
<polygon fill="#4c429d" points="412.4,434.1 411.6,433.6 407.8,433.8 402.7,436.2 400.7,435.2 398.9,434.9 394.8,436.3 391.9,438.1 388.9,436.9 385.6,436.9 383.8,438.3 382.9,440.3 382.3,443.3 383.1,447.1 383.1,449.8 382.7,450.9 382.6,454.4 383.3,461.1 382.4,461.1 382.2,461.3 382.6,462.1 386.3,465.8 391.2,464.6 397.7,465.1 403.7,462.1 410.1,460.8 411.3,455.8 416.4,450.7 418.7,447.1 419.4,446.3 419.1,444.3 418.2,441.9 417.4,440.7 413.6,435.9"/>
<polygon fill="#1a97d5" points="328.6,405.1 328.9,406.4 326.7,412.1 326.1,412.9 321.6,416.3 315.2,418.9 310.2,419.1 309.3,421.2 309.4,423.1 309.7,424.1 311.4,423.9 315.2,426.4 320.3,426.4 325.2,428.6 333.7,437.1 333.9,437.8 333.4,439.7 332.9,443.6 334.3,444.7 336.3,447.1 337.2,447.1 340.3,444.4 343.8,439.7 346.3,438.4 348.6,435.1 350.4,431.2 353.1,428.6 354.3,425.3 353.2,422.7 351.6,419.9 351.6,419.3 349.9,414.9 350.7,410.8 349.9,409.8 344.9,411.8 338.9,410.9 330.1,407.7"/>
<polygon fill="#4c429d" points="333.8,437.6 333.6,437.1 325.2,428.7 320.3,426.6 315.2,426.6 311.4,424.1 309.7,424.2 308.6,426.3 307.1,427.9 301.1,431.7 288.3,438.4 287.4,439.6 285.8,446.3 285.2,448.2 284.6,448.9 284.8,449.3 284.6,450.1 287.3,453.8 288.6,454.6 292.4,456.3 298.9,457.6 305.2,459.8 305.8,459.1 311.2,455.9 317.6,450.8 332.1,443.6 332.8,443.6"/>
<polygon fill="#a855f7" points="458.8,458.3 457.6,461.9 457.1,467.1 455.4,470.2 454.3,471.1 450.1,472.1 443.9,475.7 433.8,483.3 434.3,484.1 434.3,484.9 434.1,485.3 436.4,487.4 444.9,492.3 447.7,497.1 464.6,497.1 465.1,484.3 463.8,477.1 461.3,472.2 460.1,467.3 460.6,459.6"/>
<polygon fill="#a855f7" points="433.1,485.8 432.4,490.6 432.1,497.1 447.6,497.1 444.9,492.4 439.9,489.4 436.9,487.9 434.2,485.4"/>
<polygon fill="#a855f7" points="226.2,347.9 223.8,348.8 218.6,353.6 214.9,358.3 211.8,363.2 207.2,368.9 205.4,369.3 205.2,374.4 205.8,376.3 205.6,378.4 206.7,382.8 207.8,383.9 211.1,386.3 212.7,386.9 212.1,387.8 212.1,390.7 213.7,391.1 216.3,392.8 220.2,393.9 222.7,394.3 225.7,395.3 230.6,397.8 235.2,399.6 236.3,400.4 237.2,399.3 242.7,394.9 248.8,391.3 250.2,379.8 247.4,380.1 246.2,369.9 243.7,363.9 242.4,357.6 238.2,355.7 234.2,352.4 230.1,350.3 228.3,349.7"/>
<polygon fill="#dadada" points="281.1,346.2 279.2,346.9 274.1,346.1 268.4,346.4 263.4,345.6 260.6,347.9 254.6,350.3 242.6,357.6 243.8,363.9 246.3,369.9 247.6,380.1 249.8,379.8 250.9,379.2 252.9,378.8 256.6,379.4 262.7,381.3 265.9,381.4 266.7,381.7 270.1,385.1 270.6,383.6 272.4,370.1 278.9,363.6 280.9,362.4 283.1,359.8 282.4,357.6"/>
<polygon fill="#dadada" points="283.1,359.9 280.9,362.6 278.9,363.7 272.6,370.1 270.1,387.2 271.3,395.1 272.1,394.9 272.3,395.2 278.9,393.9 284.9,389.2 290.1,384.1 294.2,392.1 297.2,396.1 297.8,396.6 298.4,396.4 298.4,394.8 299.6,391.7 299.8,390.3 303.4,385.3 304.1,384.8 309.7,382.9 309.9,382.6 301.7,365.8 300.2,364.9 293.4,363.9 285.2,360.2"/>
<polygon fill="#dadada" points="286.7,328.1 285.8,334.3 283.9,340.1 281.2,345.9 282.6,357.6 283.2,359.8 285.2,360.1 293.4,363.8 300.2,364.8 301.8,365.8 302.6,364.9 307.6,362.4 314.8,363.7 322.4,361.2 330.2,362.4 329.9,362.1 327.4,361.3 328.1,357.4 326.3,352.8 321.2,342.7 320.6,337.4 321.1,336.6 320.9,334.6 319.9,334.4 305.1,325.1 304.1,325.4 297.3,325.4 295.2,325.1 290.1,326.3 289.9,326.6"/>
<polygon fill="#dadada" points="302.6,365.1 301.9,365.8 302.1,366.4 310.1,382.8 316.4,382.8 322.4,387.6 325.9,391.4 326.6,391.1 330.2,385.9 336.3,378.7 342.8,368.1 342.6,367.7 341.3,367.7 337.6,364.4 336.4,363.8 330.4,362.4 329.8,362.6 322.9,361.3 315.2,363.8 307.6,362.6"/>
<polygon fill="#fdd10f" points="352.2,362.7 349.8,364.4 348.2,367.7 343.7,367.7 342.8,368.2 336.4,378.7 330.3,385.9 326.7,391.1 325.9,391.6 326.1,392.2 326.4,392.6 326.4,400.2 328.6,404.9 329.9,407.4 338.9,410.8 344.8,411.7 349.8,409.6 351.2,400.4 352.3,390.6 354.4,380.3 353.7,370.8 353.8,365.7 353.1,363.4"/>
<polygon fill="#dadada" points="309.8,382.9 304.1,384.9 303.6,385.3 299.9,390.3 299.7,391.7 298.6,394.8 298.6,396.6 301.6,400.6 306.1,412.1 310.1,418.9 315.2,418.8 321.6,416.2 326.1,412.8 326.6,412.1 328.8,406.2 328.4,405.4 328.4,404.8 326.3,400.2 326.3,392.6 325.9,392.2 325.6,391.1 322.4,387.7 316.4,382.9"/>
<polygon fill="#dadada" points="290.1,384.2 284.9,389.3 278.9,394.1 272.4,395.2 266.3,398.1 262.4,405.3 260.9,409.7 260.6,410.2 262.6,416.3 269.3,416.7 274.9,419.9 280.2,425.2 287.6,437.7 288.4,438.1 294.7,435.1 299.9,432.2 307.1,427.8 308.4,426.3 309.6,424.2 309.2,421.2 310.1,419.4 309.9,418.8 305.9,412.1 301.4,400.6 298.4,396.6 297.8,396.7 297.1,396.1 294.1,392.1"/>
<polygon fill="#4c429d" points="355.1,365.1 353.9,365.8 353.8,370.8 354.6,380.3 352.4,390.6 351.3,400.4 350.1,409.2 349.8,409.7 351.1,411.1 354.9,412.2 358.1,410.9 361.4,410.3 365.6,411.8 371.2,415.2 374.9,418.1 376.7,418.1 378.2,416.9 378.1,416.2 375.8,413.1 375.1,410.8 376.4,407.2 378.1,404.7 378.6,402.6 379.2,401.3 379.7,398.7 381.2,396.1 381.7,393.4 378.3,389.8 376.8,387.8 375.6,386.9 374.8,382.2 373.3,377.1 372.4,376.7 370.6,377.1 366.9,375.8 364.3,373.8 365.6,370.7 363.2,367.7 360.2,366.1 357.6,365.3"/>
<polygon fill="#dadada" points="229.2,237.2 229.4,241.1 229.3,243.8 227.9,248.8 223.8,255.3 222.1,257.2 221.9,257.7 223.8,257.8 224.9,258.3 230.4,259.7 232.3,260.6 235.2,262.6 236.2,263.6 237.8,266.8 239.4,272.6 244.1,277.9 246.3,281.9 248.8,280.1 252.6,278.2 256.7,277.6 259.4,278.7 262.3,280.7 264.1,278.9 270.1,275.1 270.8,272.7 273.1,268.6 273.6,265.7 273.7,261.3 274.4,260.8 275.2,259.8 269.3,257.4 262.9,257.1 259.6,255.9 256.3,254.2 255.3,252.9 253.1,248.3 252.9,245.2 253.2,243.8 252.8,243.9 252.3,243.7 247.7,245.2 245.2,244.9 244.1,244.4 241.3,243.9 236.1,238.6 233.4,237.7 230.3,237.1"/>
<polygon fill="#dadada" points="250.4,201.3 249.7,201.8 247.9,205.1 246.6,206.4 238.4,210.1 234.9,210.7 231.2,212.2 229.4,212.4 231.7,216.6 233.2,222.6 230.7,227.6 228.2,230.1 228.9,232.6 228.6,234.6 229.1,236.9 230.3,236.9 235.3,238.1 236.1,238.4 241.3,243.8 244.1,244.3 245.2,244.8 246.6,244.8 247.3,245.1 252.2,243.7 256.3,240.1 261.3,238.2 265.7,233.8 265.8,232.7 266.6,230.8 266.6,229.9 265.3,225.9 263.9,223.1 263.1,222.8 262.6,222.9 260.1,218.3 256.3,212.8 253.2,205.9 250.7,202.1"/>
<polygon fill="#4c429d" points="254.8,195.2 253.9,196.1 250.7,196.9 250.9,199.6 250.4,201.2 253.3,205.9 256.4,212.8 260.2,218.3 262.4,222.7 263.8,222.8 264.2,221.7 266.7,218.4 267.9,214.1 269.8,210.8 273.2,209.2 271.8,205.8 272.6,201.9 264.6,198.1 260.2,196.4 255.7,195.8"/>
<polygon fill="#4c429d" points="282.9,211.9 281.2,211.8 277.4,210.6 276.3,209.9 275.1,210.1 273.7,209.3 273.1,209.3 269.9,210.8 268.1,214.1 266.8,218.4 264.6,221.3 263.9,222.7 265.4,225.9 266.7,229.9 266.7,230.6 267.4,230.2 269.9,229.7 279.1,228.9 279.9,227.6 282.2,225.1 283.4,212.9"/>
<polygon fill="#4c429d" points="300.7,193.6 298.4,193.1 296.1,194.1 292.8,194.7 287.1,194.1 284.6,194.4 284.7,197.6 284.1,199.6 284.2,204.1 283.8,204.7 284.1,205.2 283.9,210.7 283.1,211.9 283.6,212.9 282.4,224.3 282.3,225.1 279.2,228.8 280.1,229.9 281.3,236.9 284.8,237.6 287.7,237.2 289.6,237.6 296.3,236.9 296.7,236.4 297.2,233.2 297.7,231.9 299.1,229.7 300.1,228.7 302.4,227.8 305.9,227.3 308.4,226.6 310.3,226.8 310.7,225.7 311.1,220.1 313.8,217.4 313.6,216.7 312.2,215.2 311.8,213.9 311.8,210.3 312.2,209.2 312.2,205.4 311.3,205.1 310.2,203.9 307.1,199.9 303.1,196.2"/>
<polygon fill="#a855f7" points="254.9,193.7 254.9,195.1 255.7,195.7 260.6,196.4 265.2,198.2 272.4,201.8 274.8,200.6 275.8,200.6 277.6,199.9 280.1,199.8 282.4,200.3 283.8,199.9 284.6,197.6 284.3,194.4 279.6,194.6 273.9,192.8 259.3,190.4 258.1,189.7 255.6,191.9"/>
<polygon fill="#4c429d" points="275.7,200.8 275.7,201.1 276.7,201.9 276.3,203.1 278.6,203.9 279.4,205.3 281.3,205.8 283.7,204.8 284.1,204.1 283.9,199.9 282.6,200.4 280.1,199.9 277.6,200.1"/>
<polygon fill="#a855f7" points="283.9,205.2 283.4,204.9 281.3,205.9 279.4,205.4 278.7,206.2 277.3,206.8 276.6,206.8 276.2,207.1 276.2,207.8 277.1,208.8 276.3,209.3 276.2,209.8 281.2,211.7 283.1,211.8 283.8,210.7"/>
<polygon fill="#fdd10f" points="274.8,200.7 272.7,201.8 272.7,202.7 272.2,203.7 271.9,205.8 273.2,209.1 275.3,209.9 276.1,209.8 276.2,209.3 276.9,208.8 276.2,208.1 276.1,207.1 275.3,206.6 274.7,204.8 275.1,203.9 276.2,203.1 276.6,201.9 275.6,201.1 275.7,200.7"/>
<polygon fill="#1a97d5" points="274.8,204.8 275.4,206.6 275.9,206.9 277.3,206.7 278.7,206.1 279.3,205.4 278.6,204.1 276.3,203.2 275.2,203.9"/>
<polygon fill="#fdd10f" points="89.9,212.9 89.3,213.1 86.6,212.3 83.3,213.2 78.7,212.6 72.7,214.4 66.9,215.1 56.9,220.1 55.1,223.2 55.1,225.9 55.7,228.2 59.2,228.2 61.1,227.8 62.3,228.1 62.9,227.6 66.6,226.4 67.6,226.7 68.2,227.4 68.2,228.2 68.7,228.8 68.7,229.7 68.1,230.4 66.6,230.7 62.7,229.9 61.6,232.1 62.6,234.4 64.2,232.7 64.9,232.4 66.9,232.8 68.9,234.1 69.6,234.7 70.6,236.7 70.6,237.6 70.2,238.6 69.2,239.3 66.3,239.9 61.8,240.3 58.2,241.6 66.7,243.7 69.1,245.9 69.2,247.4 68.2,251.9 70.8,252.6 73.9,251.3 77.3,249.6 81.3,249.4 85.2,250.7 89.8,252.7 92.6,253.2 93.4,252.6 94.6,252.6 95.2,250.8 96.8,248.2 95.6,245.7 89.3,241.9 88.1,238.9 89.4,236.8 92.8,236.2 93.4,235.7 93.7,234.8 91.8,219.9 90.6,216.4"/>
<polygon fill="#1a97d5" points="90.1,212.8 90.7,216.4 92.1,220.7 93.8,234.1 93.4,235.8 94.1,236.3 97.4,237.2 101.7,237.4 104.7,236.9 107.7,235.2 114.1,237.6 118.3,238.7 121.2,239.9 124.4,239.3 126.9,236.8 129.6,236.8 131.9,238.1 133.7,237.4 134.2,237.6 135.4,235.3 139.4,231.6 142.6,228.2 143.8,225.2 143.2,221.9 142.3,221.1 141.6,219.4 140.9,219.7 140.3,219.6 133.9,216.3 130.2,214.8 126.1,216.4 120.1,220.3 119.6,220.4 118.6,220.1 116.6,218.3 114.1,214.6 111.6,211.6 108.6,208.6 106.3,205.7 96.3,206.9 92.7,209.3 90.7,212.3"/>
<polygon fill="#f58220" points="88.2,238.9 89.4,241.9 95.6,245.6 96.9,248.2 95.3,250.8 94.7,252.3 94.7,252.7 95.6,253.6 95.7,254.4 98.2,255.7 101.8,256.6 107.4,259.9 109.7,261.8 112.4,263.2 117.6,263.8 122.6,266.9 127.6,265.7 130.8,266.9 131.4,267.9 132.3,268.1 136.2,266.7 137.4,265.7 138.6,262.1 138.9,259.4 139.7,258.3 139.3,257.9 139.2,257.1 139.4,254.8 138.8,250.8 138.3,249.3 135.6,243.9 134.6,241.4 133.9,238.7 134.1,237.6 131.9,238.2 129.6,236.9 126.9,236.9 124.4,239.4 121.2,240.1 118.3,238.8 114.1,237.7 107.6,235.3 105.1,236.9 101.7,237.6 97.4,237.3 94.1,236.4 93.3,235.9 92.8,236.3 89.4,236.9"/>
<polygon fill="#cb1489" points="375.7,176.7 375.7,177.2 377.2,179.1 379.3,180.3 380.2,181.4 382.2,186.7 383.6,190.9 384.3,194.3 385.7,198.2 385.6,203.1 383.8,213.6 384.8,220.9 385.2,221.9 387.6,223.6 390.1,225.8 392.6,227.1 396.6,226.4 406.7,223.9 413.9,225.2 417.2,223.8 424.1,221.9 424.7,220.2 423.1,218.3 419.9,216.4 412.7,212.8 408.9,211.3 404.4,209.1 401.6,206.2 399.8,203.8 397.4,202.1 393.8,200.3 391.1,197.6 389.7,195.2 389.9,192.4 390.6,189.8 389.9,185.7 388.8,181.7 388.4,179.2 386.3,176.4 383.3,175.2 378.7,175.6 376.6,176.7"/>
<polygon fill="#1a97d5" points="388.6,179.3 390.7,189.3 389.8,195.2 391.2,197.6 393.8,200.2 397.4,201.9 399.8,203.7 401.7,206.2 404.4,208.9 419.9,216.3 423.1,218.2 424.8,220.2 428.2,218.8 431.2,216.4 431.8,212.4 431.2,207.7 428.2,205.9 424.4,205.3 421.8,202.1 425.7,195.7 430.9,198.6 434.9,200.1 439.9,201.3 441.9,197.6 440.6,196.8 438.1,193.8 434.9,191.8 431.9,193.3 424.7,194.4 423.9,194.2 423.4,193.7 422.4,191.3 420.2,190.2 417.2,191.3 416.2,191.2 414.3,190.4 413.6,189.8 410.2,184.1 407.8,181.1 405.1,178.3 401.4,177.1 396.8,176.8 389.3,179.6"/>
<polygon fill="#1a97d5" points="425.7,195.8 421.9,202.1 424.4,205.2 428.2,205.8 431.3,207.7 431.9,212.4 431.3,216.4 428.2,218.9 424.8,220.3 424.1,222.1 425.8,224.2 426.3,227.1 427.1,227.3 428.3,228.8 429.1,228.8 436.6,232.8 440.1,237.4 440.3,236.6 443.4,231.6 445.8,226.8 448.2,219.4 449.9,215.9 457.4,204.8 459.4,200.8 451.4,197.7 445.9,197.1 442.1,197.6 439.9,201.4 434.9,200.2 430.9,198.7"/>
<polygon fill="#4c429d" points="323.2,323.8 323.2,329.1 321.6,333.6 321.1,334.3 321.2,336.6 320.7,337.4 321.3,342.7 326.4,352.8 328.2,357.4 327.6,361.3 329.9,361.9 330.6,362.4 336.4,363.7 337.6,364.3 341.3,367.6 342.6,367.6 342.8,367.9 343.7,367.6 348.2,367.6 349.7,364.4 352.1,362.7 352.6,360.7 352.7,358.7 353.1,357.9 349.6,355.9 343.4,349.8 341.2,346.9 339.9,338.8 338.1,335.7 337.4,332.3 337.7,331.4 339.4,328.7 338.9,326.6 337.4,325.8 330.9,324.4 327.9,324.1 326.4,324.8 325.6,324.8"/>
<polygon fill="#8cc63f" points="341.3,321.9 341.3,324.4 340.3,325.9 339.1,326.6 339.6,328.7 337.6,331.9 338.2,335.7 340.1,338.8 341.3,346.9 343.6,349.8 349.6,355.8 353.2,357.8 357.2,353.7 362.6,350.6 365.1,347.6 365.6,346.7 365.6,346.1 362.6,344.6 359.7,342.3 356.1,338.7 353.8,335.3 353.1,331.7 352.9,327.4 352.3,323.1 349.9,321.4 349.4,320.7"/>
<polygon fill="#4c429d" points="358.2,311.9 354.4,320.6 354.1,322.2 352.4,323.2 353.1,327.4 353.2,331.7 353.9,335.3 356.2,338.7 359.7,342.2 362.6,344.4 365.6,345.9 366.6,345.4 369.2,343.3 371.2,341.1 372.4,341.1 373.2,340.6 374.7,343.1 380.1,349.8 380.7,349.8 381.9,348.8 383.3,347.2 385.1,343.9 386.6,340.4 385.6,332.9 386.4,329.4 386.8,328.9 389.9,327.6 390.9,324.2 392.4,323.3 392.4,322.1 393.9,320.6 395.7,317.6 392.7,315.9 390.7,318.8 389.6,319.9 387.2,321.6 385.9,321.9 381.7,320.8 378.6,320.8 375.2,318.9 371.6,314.6 370.1,311.3 365.6,310.7 361.4,311.9"/>
<polygon fill="#4c429d" points="413.8,314.4 407.4,314.4 402.6,315.7 399.4,317.6 399.9,320.3 399.1,322.1 398.4,322.7 394.7,323.9 393.7,324.1 392.6,323.4 391.3,323.9 390.9,324.4 390.1,327.6 386.7,329.2 385.7,332.4 386.7,340.4 387.8,340.8 389.6,342.8 393.6,344.7 395.9,346.2 399.1,346.7 401.1,345.2 403.8,342.4 405.2,341.8 406.8,340.3 407.4,340.4 410.6,343.3 413.3,345.2 414.1,345.4 414.1,344.7 415.9,341.8 418.8,340.7 421.7,338.4 422.1,337.8 422.6,335.1 417.4,328.6 415.2,321.8 415.2,320.2 415.7,317.6"/>
<polygon fill="#1a97d5" points="168.7,322.4 168.6,323.2 167.6,324.4 168.2,328.9 169.9,333.4 169.9,335.2 169.4,338.6 168.8,339.3 168.2,339.4 168.3,340.7 167.3,342.3 167.9,343.1 168.2,344.3 170.9,347.7 174.4,353.1 179.7,358.9 182.3,364.3 186.6,364.4 190.3,367.1 192.6,371.2 196.3,373.1 201.2,374.3 205.1,373.7 205.3,369.3 200.8,366.9 198.7,364.8 196.7,362.3 196.2,360.3 196.3,358.7 193.9,351.6 192.7,349.9 191.7,348.1 191.3,345.7 194.1,344.1 196.2,343.3 198.3,341.8 199.7,340.1 200.3,338.6 201.3,335.2 200.9,334.1 199.9,333.9 197.1,331.7 192.8,330.2 187.3,327.4 183.2,324.4 182.3,323.1 177.8,321.9 172.8,323.2 169.4,322.2"/>
<polygon fill="#1a97d5" points="156.1,323.1 156.1,324.6 161.2,326.6 163.3,327.2 164.1,325.7 160.2,323.6"/>
<polygon fill="#1a97d5" points="160.4,332.9 161.1,335.9 166.4,342.2 167.2,342.3 168.2,340.7 168.2,339.6 167.3,339.3 166.8,338.8 165.8,336.7 163.4,333.6"/>
<polygon fill="#1a97d5" points="165.7,349.7 165.4,379.3 165.1,389.3 168.8,389.9 170.8,393.2 168.8,396.1 164.6,395.6 166.1,400.6 165.9,401.6 167.1,401.9 171.6,402.3 177.6,404.8 184.1,406.1 189.7,408.3 190.7,409.2 195.1,414.7 199.7,412.8 200.3,411.9 205.1,398.7 208.2,393.6 210.1,391.8 211.9,390.7 211.9,387.8 212.6,386.9 211.1,386.4 207.8,384.1 206.6,382.8 205.4,378.4 205.7,376.3 205.3,375.7 205.1,373.8 201.2,374.4 196.3,373.2 192.6,371.3 190.2,367.1 186.3,364.4 182.4,364.6 184.9,373.3 188.3,380.1 187.9,384.4 187.7,384.6 186.6,384.2 185.9,380.1 183.6,376.2 181.2,371.4 179.8,367.2 177.6,363.3 169.8,356.8 167.8,354.1"/>
<polygon fill="#1a97d5" points="254.2,115.1 253.6,119.6 253.6,126.6 253.3,129.8 253.6,136.3 253.9,136.7 254.1,137.3 257.3,137.6 259.9,138.2 265.6,140.4 268.7,142.3 272.2,143.8 276.4,143.8 279.4,144.3 279.8,144.6 279.2,146.3 281.7,147.6 286.2,148.2 290.2,149.6 296.9,150.7 300.1,150.2 301.3,150.3 301.6,148.1 301.6,142.4 300.4,139.1 298.3,135.4 297.2,131.9 293.8,129.2 292.1,126.8 290.9,124.6 287.7,125.2 282.9,124.7 281.8,124.3 279.3,122.8 277.3,119.6 273.3,116.8 271.4,113.6 269.9,109.6 270.1,109.1 269.4,109.1 268.6,108.6 262.3,109.4 257.3,111.9"/>
<polygon fill="#8cc63f" points="270.2,109.1 270.1,109.6 271.6,113.6 273.4,116.8 277.2,119.3 279.3,122.7 281.8,124.2 282.9,124.6 287.7,125.1 290.9,124.4 292.2,126.8 293.9,129.2 297.3,131.9 298.4,135.4 300.6,139.1 301.7,142.4 301.7,148.1 301.4,150.4 304.2,152.3 306.4,152.1 322.4,152.3 327.7,152.9 331.9,154.1 333.6,150.2 333.1,147.8 333.1,146.4 334.2,143.3 332.2,139.9 328.7,138.2 320.4,139.3 319.4,139.2 318.7,138.6 317.9,137.1 316.6,133.1 313.6,131.3 309.1,131.9 308.2,131.7 305.6,129.4 305.3,128.9 304.8,124.9 303.7,121.6 301.1,118.8 296.1,120.1 293.7,122.3 293.2,122.4 291.7,121.9 288.9,119.2 286.1,116.8 285.4,113.8 283.7,111.4 284.2,108.1 282.9,105.3 277.7,106.2 272.7,107.4 270.7,108.9"/>
<polygon fill="#dadada" points="204.3,448.4 202.4,444.7 199.9,442.2 196.6,442.4 193.2,443.1 174.8,444.7 169.1,445.9 164.3,445.3 158.7,445.9 154.6,448.9 151.3,452.8 153.9,455.4 160.1,459.4 160.7,460.1 160.8,461.3 160.1,462.7 160.7,465.9 162.8,465.4 166.4,466.8 178.9,472.2 183.7,474.6 187.2,477.3 188.2,477.6 191.4,477.2 194.7,475.7 195.6,475.6 194.9,472.6 196.1,468.1 203.7,452.8"/>
<polygon fill="#dadada" points="200.1,442.2 202.6,444.7 204.4,448.8 203.8,452.8 196.2,468.1 195.1,472.6 195.7,475.6 196.4,475.8 197.9,476.9 200.9,479.9 203.8,482.2 211.9,482.2 214.6,482.6 218.4,482.2 219.2,482.3 218.9,476.6 221.3,473.9 223.1,470.9 221.8,467.2 219.3,463.9 220.6,460.9 224.7,456.8 227.8,454.3 229.9,451.6 222.6,454.6 218.2,453.1 211.2,451.3 209.8,450.7 204.8,444.4 202.3,442.7"/>
<polygon fill="#f58220" points="251.1,430.9 248.4,431.2 236.6,433.6 236.3,433.8 239.2,439.6 239.9,442.9 237.6,444.7 236.1,448.1 233.2,450.3 230.1,451.6 228.3,453.9 224.7,456.9 220.7,460.9 219.4,464.1 221.9,467.2 223.2,470.9 221.4,473.9 219.1,476.6 219.3,479.7 219.2,482.4 220.3,482.6 225.1,482.2 225.7,477.7 226.4,477.1 229.4,476.6 229.7,475.3 230.3,474.6 229.9,473.9 231.1,471.7 233.8,469.6 235.4,466.7 238.8,463.9 242.1,463.9 243.7,464.6 243.1,462.2 246.2,457.9 248.8,458.9 250.1,457.7 253.7,456.4 258.2,457.1 258.3,455.6 258.7,454.8 261.3,451.6 265.1,450.3 266.9,448.4 261.6,444.9 258.7,441.4 256.2,437.7 255.1,435.3 252.7,433.9"/>
<polygon fill="#dadada" points="230.1,473.9 230.4,474.6 231.3,474.3 232.8,474.8 236.2,477.1 240.1,480.6 245.2,481.6 252.6,485.3 257.8,485.9 259.2,486.3 259.7,486.7 260.3,486.6 262.7,487.2 267.8,485.2 270.1,483.4 266.3,482.2 264.6,480.4 264.4,479.4 265.7,476.6 266.3,473.1 265.2,467.6 263.9,465.2 258.2,457.2 253.7,456.6 250.1,457.8 248.8,459.1 246.2,458.1 245.3,459.6 243.2,462.2 243.7,464.1 243.6,464.6 242.1,464.1 238.8,464.1 235.6,466.7 233.9,469.6 231.2,471.7"/>
<polygon fill="#dadada" points="428.3,228.9 427.9,230.3 426.3,232.3 425.8,235.1 424.3,239.1 421.4,244.1 419.9,246.2 418.2,249.8 416.6,250.4 416.4,250.8 417.1,252.6 418.6,253.1 420.9,254.8 423.2,257.7 424.9,261.6 426.6,264.3 426.2,265.2 426.3,265.8 427.1,265.7 428.1,266.1 429.4,267.9 432.7,268.6 434.9,267.4 437.7,264.7 440.1,261.1 439.4,255.6 441.3,240.9 440.1,238.2 440.1,237.6 436.6,232.9 429.1,228.9"/>
<polygon fill="#fdd10f" points="416.3,250.6 413.6,248.7 410.1,247.1 407.6,247.3 404.3,246.2 395.3,244.6 393.8,243.6 391.9,245.2 388.4,246.3 385.4,249.9 383.1,252.3 380.3,256.3 377.4,258.7 373.8,260.4 374.1,260.9 373.9,261.3 374.3,261.7 375.1,263.6 373.3,265.8 373.2,266.4 373.8,269.9 374.6,271.3 375.1,273.2 376.1,275.1 376.2,275.8 378.1,276.8 381.1,277.6 381.8,276.8 385.2,276.2 392.7,273.7 396.2,271.9 402.6,266.8 406.4,266.2 414.1,263.6 416.1,263.3 416.4,262.6 415.7,258.3 415.7,253.9 416.7,253.6 416.9,252.9"/>
<polygon fill="#fdd10f" points="416.1,263.4 414.1,263.7 406.4,266.3 402.6,266.9 396.2,272.1 392.7,273.8 385.2,276.3 381.8,276.9 381.2,277.6 382.2,278.6 383.4,280.4 385.7,286.1 387.7,287.7 389.1,289.4 394.7,295.2 397.1,301.2 395.7,304.1 395.9,304.8 395.8,307.3 396.9,307.9 400.2,304.1 403.1,300.1 404.4,294.9 404.9,291.4 406.7,288.8 416.1,281.3 421.4,275.9 423.2,273.6 420.4,272.8 419.4,272.1 419.3,270.9 419.8,269.8 420.6,269.2 419.8,267.4"/>
<polygon fill="#4c429d" points="417.1,252.7 416.8,253.6 415.8,253.9 415.8,258.3 416.6,262.6 416.2,263.4 419.9,267.4 420.7,269.2 421.4,269.2 423.1,267.2 425.6,266.6 426.2,265.9 426.1,265.2 426.4,264.3 424.8,261.6 423.1,257.7 421.3,255.3 418.6,253.2"/>
<polygon fill="#4c429d" style="stroke:none" points="28.8,318.2 26.3,320.7 26.1,323.4 28.1,331.7 29.8,336.4 32.6,339.8 35.6,338.3 38.7,336.4 40.1,332.7 39.2,326.2 39.2,324.7 39.4,324.3 38.9,323.8 38.4,322.4 37.4,322.2 32.8,318.9"/>
<polygon fill="#4c429d" style="stroke:none" points="43.2,310.7 42.6,313.2 44.6,315.7 44.7,316.7 43.1,318.9 42.2,320.8 41.6,321.4 38.6,322.3 39.1,323.8 39.4,324.2 40.3,323.7 41.2,323.6 43.1,324.4 46.7,325.1 57.7,323.1 58.7,321.6 58.7,321.2 55.2,319.4 51.9,318.4 50.8,317.4 49.4,315.1 49.3,311.2 46.3,309.4"/>
<polygon fill="#4c429d" style="stroke:none" points="56.3,337.6 54.4,340.2 55.7,343.2 58.8,343.8 61.3,341.9 61.3,339.4 58.8,337.6"/>
<polygon fill="#4c429d" style="stroke:none" points="73.1,317.8 68.2,319.6 68.4,320.3 73.3,318.6"/>
<polygon fill="#dadada" style="stroke:none" points="29.4,356.9 27.6,360.2 28.6,363.2 30.8,365.9 31.9,369.4 35.2,372.1 37.7,373.6 41.9,374.6 43.7,376.8 43.6,378.4 42.8,379.6 42.1,379.8 40.7,379.4 38.2,380.7 38.6,383.2 40.7,384.4 43.3,382.9 48.7,384.4 51.4,384.1 52.6,384.2 53.4,385.1 53.2,386.4 54.1,388.2 55.8,386.2 57.3,383.7 54.9,377.9 52.7,374.6 49.1,370.9 48.9,369.9 50.1,368.8 48.9,367.1 45.3,363.4 37.8,357.7 33.3,355.7"/>
<polygon fill="#dadada" style="stroke:none" points="34.4,401.7 31.8,404.3 29.6,407.7 29.3,408.6 29.1,411.9 29.7,415.1 32.7,422.6 32.7,424.3 32.3,426.7 30.8,429.7 28.6,432.3 30.1,433.6 38.6,431.7 42.4,432.9 44.8,432.4 47.7,429.1 49.3,426.2 51.8,422.6 53.7,418.7 56.1,415.4 54.6,413.1 50.9,409.4 47.4,406.6 42.9,404.1"/>
<polygon fill="#95c93d" style="stroke:none" points="31.8,455.4 30.7,457.8 27.8,461.1 29.1,463.9 30.8,466.8 32.1,470.4 35.8,472.9 40.8,475.4 44.9,477.2 49.9,478.4 55.7,477.6 58.8,475.3 60.7,467.2 55.6,462.1 53.1,458.3 51.3,454.7 47.1,453.1 40.9,452.2 36.3,452.8"/>
<polygon fill="#a855f7" style="stroke:none" points="38.6,496.6 36.6,494.1 33.8,491.6 31.4,493.3 28.6,496.6"/>
<polygon fill="#4c429d" points="160.7,252.6 158.8,252.4 153.9,254.9 151.9,255.7 139.7,258.4 139.1,259.4 138.7,262.1 137.6,265.7 136.4,266.7 132.3,268.2 131.4,268.1 131.3,268.7 130.8,269.2 128.8,269.9 125.7,272.4 127.7,274.4 130.2,275.9 132.4,276.8 132.9,276.8 136.8,274.9 142.9,274.6 146.9,276.2 150.4,279.6 149.1,280.4 145.8,278.3 142.4,277.2 139.1,277.6 136.8,278.6 136.3,282.4 138.7,283.8 139.6,284.7 140.6,287.6 140.6,288.2 153.9,295.4 156.9,294.4 159.4,291.9 160.9,289.8 163.9,286.8 166.2,285.2 166.8,282.3 165.7,278.9 163.7,274.9 167.6,272.9 171.4,272.3 174.3,271.1 173.7,268.1 170.1,266.3 168.1,263.7 169.9,261.8 166.7,259.8 164.9,256.2 162.4,253.7 162.7,253.1"/>
<polygon fill="#4c429d" points="140.6,288.3 138.2,293.6 138.8,297.4 142.1,300.7 145.2,305.7 147.6,310.1 153.8,313.1 160.1,318.1 166.6,321.3 167.9,321.7 168.6,322.4 169.4,322.1 172.8,323.1 177.8,321.8 182.6,323.1 186.3,320.6 185.8,317.1 186.1,316.2 185.1,309.8 183.8,304.2 180.4,295.7 179.4,294.1 178.4,291.4 177.6,291.3 174.1,288.9 166.2,285.3 163.9,286.9 161.1,289.8 159.6,291.9 156.9,294.6 153.9,295.6"/>
<polygon fill="#1a97d5" points="162.7,253.2 162.6,253.7 165.1,256.2 166.8,259.8 170.1,261.8 168.2,263.7 170.1,266.2 173.8,268.1 174.4,270.9 174.2,271.3 171.4,272.4 167.6,273.1 163.8,274.9 165.8,278.9 166.9,282.3 166.3,284.9 166.4,285.3 170.2,287.2 173.1,288.3 177.3,291.1 178.4,291.3 178.8,290.3 180.1,289.3 183.9,288.1 187.9,286.1 191.4,285.3 196.2,284.9 198.4,284.9 200.6,285.4 201.8,284.6 203.9,282.4 205.3,282.4 205.2,281.4 206.3,279.3 207.1,274.9 208.9,270.9 210.2,266.9 210.7,264.2 211.7,262.3 211.6,262.1 209.9,261.8 197.8,257.9 195.1,256.3 191.2,253.3 189.2,253.4 185.3,254.2 177.7,254.4 169.4,253.3"/>
<polygon fill="#4c429d" points="373.2,340.7 372.4,341.2 371.2,341.2 369.2,343.4 365.7,346.1 365.7,346.7 365.2,347.6 362.6,350.7 357.2,353.8 352.9,358.3 352.7,360.7 352.2,362.6 353.2,363.4 353.9,365.7 355.1,364.9 357.6,365.2 360.2,365.9 363.2,367.6 365.7,370.7 364.4,373.8 366.6,375.4 370.6,376.9 372.3,376.6 373.3,376.9 374.9,382.2 375.7,386.9 376.9,387.8 378.4,389.8 381.8,393.4 383.7,393.2 385.2,391.7 391.8,388.2 394.6,386.4 398.1,384.9 401.7,383.8 398.1,377.6 400.2,374.8 401.9,373.9 399.6,372.2 396.8,369.4 395.6,365.8 396.2,362.6 394.4,360.2 391.3,358.3 388.8,359.6 386.4,357.8 382.9,354.3 380.7,350.9 380.7,349.9 380.1,349.9 379.3,349.2 374.6,343.1"/>
<polygon fill="#a855f7" points="386.6,340.6 384.2,345.9 382.6,348.3 380.8,349.8 380.7,350.7 383.1,354.3 386.4,357.7 388.9,359.4 391.3,358.2 394.6,360.2 396.3,362.6 395.7,365.8 396.9,369.4 399.6,372.1 402.2,374.1 405.2,375.8 407.3,375.3 411.2,373.9 411.9,374.1 412.4,373.4 414.9,372.6 418.2,371.9 420.8,370.3 425.1,368.2 425.6,365.9 426.9,362.6 425.2,359.6 422.6,356.3 421.3,352.6 419.1,349.7 416.3,346.9 414.7,346.3 414.1,345.6 413.3,345.3 410.6,343.4 407.4,340.6 406.8,340.4 406.3,340.7 405.2,341.9 403.8,342.6 401.1,345.3 399.1,346.8 395.9,346.3 393.6,344.8 389.6,342.9 387.8,340.9"/>
<polygon fill="#dadada" points="411.7,374.1 405.3,375.9 402.1,374.1 400.2,374.9 398.2,377.6 401.8,383.8 395.6,386.1 385.2,391.8 383.7,393.3 381.8,393.6 381.3,396.1 379.8,398.7 379.3,401.3 378.7,402.6 378.2,404.7 376.6,407.2 375.2,410.8 375.9,413.1 378.1,415.9 378.3,416.9 384.4,414.6 385.4,413.9 387.1,412.3 390.3,408.2 395.1,404.1 399.4,404.7 403.1,402.7 410.3,401.6 414.6,401.2 416.4,400.6 416.6,399.9 422.6,395.1 423.2,390.4 422.9,389.6 421.4,387.1 417.9,383.6 413.1,377.4 411.8,375.1"/>
<polygon fill="#a855f7" points="416.4,400.7 414.6,401.3 410.3,401.7 403.1,402.8 399.4,404.8 395.1,404.2 390.4,408.2 387.2,412.3 385.4,414.1 384.4,414.7 380.3,416.2 379.1,416.9 378.2,417.1 376.7,418.2 376.4,421.8 377.7,424.2 378.3,427.9 380.9,430.6 382.6,433.4 385.2,435.8 385.6,436.8 388.9,436.8 391.9,437.9 394.8,436.2 398.9,434.8 400.7,435.1 402.7,436.1 407.8,433.7 411.6,433.4 413.8,430.6 417.7,429.9 419.8,428.8 418.2,426.2 415.4,422.8 413.7,419.3 414.3,415.3 416.1,411.8 418.1,408.8 417.7,408.3 417.7,407.3 418.8,403.6 416.6,401.3"/>
<polygon fill="#1a97d5" points="443.2,417.3 439.7,418.7 436.7,419.2 435.8,419.1 432.8,418.1 425.1,414.2 419.2,409.4 418.1,408.9 416.2,411.8 414.4,415.3 413.8,419.3 415.6,422.8 418.3,426.2 419.9,428.8 417.7,430.1 413.8,430.7 411.7,433.6 412.6,434.1 414.1,436.4 417.6,440.7 418.6,442.4 419.6,446.3 420.7,446.1 425.2,441.6 428.1,439.9 430.9,437.1 433.4,435.1 437.6,432.9 438.4,429.9 439.9,427.4 442.6,424.2 444.1,420.6"/>
<polygon fill="#4c429d" points="350.7,410.9 350.1,414.9 351.7,419.3 351.7,419.9 353.3,422.7 354.4,425.3 353.2,428.4 356.8,430.2 360.8,433.6 364.3,435.6 370.4,438.6 374.9,439.7 380.2,439.7 384.1,438.1 385.4,436.9 385.1,435.8 382.4,433.4 380.8,430.6 378.2,427.9 377.6,424.2 376.3,421.8 376.6,418.2 374.9,418.2 371.6,415.6 365.6,411.9 361.4,410.4 358.1,411.1 355.2,412.3"/>
<polygon fill="#4c429d" points="337.3,447.1 338.4,447.7 342.7,449.2 345.9,450.8 348.2,453.6 352.1,452.9 354.9,451.7 357.9,451.1 361.3,451.7 363.8,453.6 367.3,452.9 367.9,453.1 370.7,454.4 371.3,455.1 371.9,458.3 376.2,460.1 380.9,460.7 382.1,461.2 382.4,460.9 383.2,461.1 382.4,454.4 382.6,450.9 382.9,449.8 382.9,447.1 382.2,443.3 382.9,439.9 383.9,438.2 380.2,439.8 374.9,439.8 370.4,438.7 364.3,435.7 360.8,433.7 356.8,430.3 353.3,428.6 350.6,431.2 348.7,435.1 346.4,438.4 343.8,439.8 340.4,444.4"/>
<polygon points="360.4,446.0 362.8,445.0 365.6,446.2 367.1,448.8 365.6,451.0 362.8,450.5 360.6,448.5" style="fill:#fff;stroke:none"/><polygon points="402.6,120.2 404.5,117.9 406.3,120.2" style="fill:#4c429d;stroke:none"/>
<polygon points="405.6,215 405.6,223.4 407.5,221.7 408.9,224.9 410.1,224.3 408.8,221.2 411.2,221.1" style="fill:#fff;stroke:#222;stroke-width:0.6"/>
</svg>
<div class="abs" style="left:501.3px;top:125.7px;font-size:14.83px;font-weight:bold;color:#111;line-height:20px;">Statistiques sur les devis par département</div>
<div class="abs" style="left:501.9px;top:157.3px;font-size:7.655px;color:#222;line-height:10px;white-space:nowrap">1 - Sélectionner les filtres souhaités ci-dessous et raffraichissez pour afficher les informations.<br>2 - Cliquer ensuite sur un département pour afficher ses informations</div>
<svg class="ic" style="left:0;top:0" width="1024" height="496" viewBox="0 0 1024 496"><rect x="340.25" y="120.25" width="103.5" height="43.25" rx="5.2" fill="#fff" stroke="#7a7a7a" stroke-width="0.95"/></svg>
<div class="abs" style="left:346.2px;top:126.75px;line-height:10.3px;transform-origin:0 50%;font-size:8.15px;color:#333;font-weight:bold">Meurthe-et-Moselle (54)</div>
<div class="abs" style="left:346.2px;top:137.1px;line-height:10.3px;transform-origin:0 50%;font-size:7.8px;color:#555;transform:scaleX(0.925)">Nb Devis</div><div class="abs" style="left:377.6px;top:134.6px;line-height:10.3px;transform-origin:0 50%;font-size:10.5px;color:#555;">→</div><div class="abs" style="left:388px;top:137.1px;line-height:10.3px;transform-origin:0 50%;font-size:7.8px;color:#555;transform:scaleX(0.925)">596</div>
<div class="abs" style="left:346px;top:147.45px;line-height:10.3px;transform-origin:0 50%;font-size:7.8px;color:#555;transform:scaleX(0.925)">Total HT</div><div class="abs" style="left:374.7px;top:144.95px;line-height:10.3px;transform-origin:0 50%;font-size:10.5px;color:#555;">→</div><div class="abs" style="left:385.8px;top:147.45px;line-height:10.3px;transform-origin:0 50%;font-size:8.15px;color:#333;font-weight:bold;transform:scaleX(0.955)">2 787 796,33€</div>
<div class="abs" style="left:466.1px;top:403.8px;font-size:8.6px;color:#444;line-height:11px;">Répartition des devis par départements</div>
<div class="abs" style="left:489.9px;top:419.4px;font-size:6.62px;color:#333;line-height:10px;">Moins 10 000</div>
<div class="abs" style="left:489.9px;top:435.6px;font-size:6.62px;color:#333;line-height:10px;">De 10 001 à 25 000</div>
<div class="abs" style="left:489.9px;top:451.8px;font-size:6.62px;color:#333;line-height:10px;">De 25 001 à 50 000</div>
<div class="abs" style="left:489.9px;top:468.0px;font-size:6.62px;color:#333;line-height:10px;">De 50 001 à 100 000</div>
<div class="abs" style="left:489.9px;top:484.2px;font-size:6.62px;color:#333;line-height:10px;">De 100 001 à 500 000</div>
<svg class="ic" style="left:0;top:0" width="1024" height="496" viewBox="0 0 1024 496"><rect x="469.1" y="419.0" width="15.7" height="10" fill="#ee1c25"/><rect x="469.1" y="435.2" width="15.7" height="10" fill="#f58220"/><rect x="469.1" y="451.4" width="15.7" height="10" fill="#fdd10f"/><rect x="469.1" y="467.6" width="15.7" height="10" fill="#a855f7"/><rect x="469.1" y="483.8" width="15.7" height="10" fill="#4c429d"/></svg>
<svg class="ic" style="left:0;top:0" width="1024" height="496" viewBox="0 0 1024 496"><ellipse cx="125.1" cy="85.5" rx="46.5" ry="27.9" fill="none" stroke="#e9141c" stroke-width="1.7"/><ellipse cx="533.9" cy="448.5" rx="150.3" ry="78.7" fill="none" stroke="#e9141c" stroke-width="1.7"/></svg>
</body></html>
